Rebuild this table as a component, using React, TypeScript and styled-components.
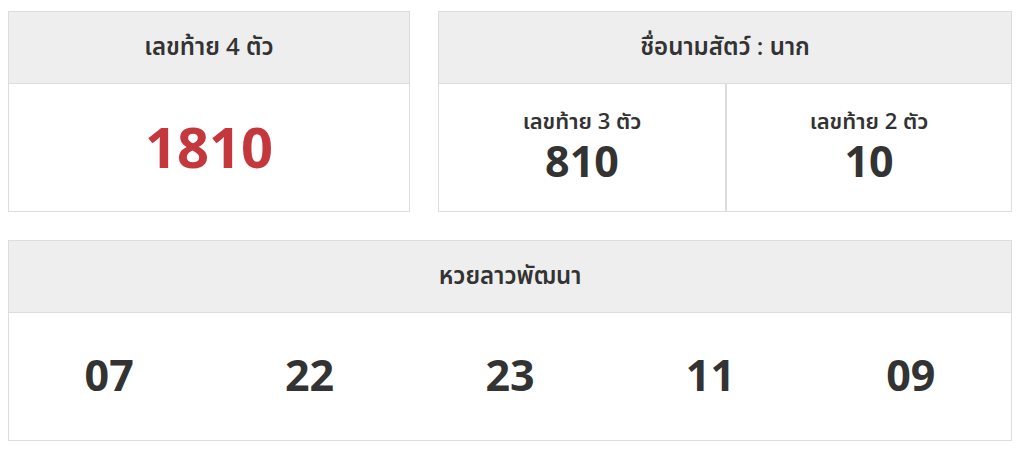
import React from 'react';
import styled, { createGlobalStyle } from 'styled-components';

const GlobalStyle = createGlobalStyle`
  body {
    margin: 8px;
    background: #ffffff;
    font-family: "Open Sans", "Noto Sans", "Noto Sans Thai", sans-serif;
    color: #333333;
  }
`;

const Wrapper = styled.div`
  width: 1004px;
  padding-top: 3px;
  display: flex;
  flex-direction: column;
  gap: 28px;
`;

const TopRow = styled.div`
  display: flex;
  gap: 28px;
`;

const Card = styled.div<{ $width?: string }>`
  border: 1px solid #dddddd;
  background: #ffffff;
  box-sizing: border-box;
  width: ${(p) => p.$width || 'auto'};
  flex: ${(p) => (p.$width ? '0 0 auto' : '1')};
  display: flex;
  flex-direction: column;
`;

const Header = styled.div`
  height: 71px;
  background: #eeeeee;
  border-bottom: 1px solid #dddddd;
  display: flex;
  align-items: center;
  justify-content: center;
  font-size: 24px;
  font-weight: 600;
  color: #333333;
`;

const Body = styled.div`
  height: 127px;
  box-sizing: border-box;
  padding-bottom: 4px;
  display: flex;
  align-items: center;
  justify-content: center;
`;

const BigNumber = styled.div<{ $red?: boolean }>`
  font-size: 56px;
  font-weight: 700;
  line-height: 1;
  color: ${(p) => (p.$red ? '#c4373c' : '#333333')};
`;

const Split = styled.div`
  height: 127px;
  display: grid;
  grid-template-columns: 1fr 1fr;
`;

const SplitCell = styled.div<{ $divider?: boolean }>`
  display: flex;
  flex-direction: column;
  align-items: center;
  justify-content: center;
  gap: 6px;
  border-left: ${(p) => (p.$divider ? '2px solid #dddddd' : 'none')};
  padding-bottom: 6px;
`;

const SubLabel = styled.div`
  font-size: 22px;
  font-weight: 600;
  line-height: 1.2;
`;

const MidNumber = styled.div`
  font-size: 43px;
  font-weight: 700;
  line-height: 1;
`;

const NumberGrid = styled.div`
  height: 127px;
  box-sizing: border-box;
  padding-bottom: 4px;
  display: grid;
  grid-template-columns: repeat(5, 1fr);
  align-items: center;
  justify-items: center;
`;

const LaoNumber = styled.div`
  font-size: 43px;
  font-weight: 700;
  line-height: 1;
`;

const laoNumbers = ['07', '22', '23', '11', '09'];

const App: React.FC = () => {
  return (
    <>
      <GlobalStyle />
      <Wrapper>
        <TopRow>
          <Card $width="402px">
            <Header>เลขท้าย 4 ตัว</Header>
            <Body>
              <BigNumber $red>1810</BigNumber>
            </Body>
          </Card>
          <Card>
            <Header>ชื่อนามสัตว์ : นาก</Header>
            <Split>
              <SplitCell>
                <SubLabel>เลขท้าย 3 ตัว</SubLabel>
                <MidNumber>810</MidNumber>
              </SplitCell>
              <SplitCell $divider>
                <SubLabel>เลขท้าย 2 ตัว</SubLabel>
                <MidNumber>10</MidNumber>
              </SplitCell>
            </Split>
          </Card>
        </TopRow>
        <Card>
          <Header>หวยลาวพัฒนา</Header>
          <NumberGrid>
            {laoNumbers.map((n) => (
              <LaoNumber key={n}>{n}</LaoNumber>
            ))}
          </NumberGrid>
        </Card>
      </Wrapper>
    </>
  );
};

export default App;
